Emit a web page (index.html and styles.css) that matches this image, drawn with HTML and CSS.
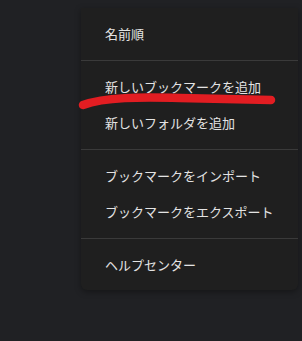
FILE: index.html
```html
<!DOCTYPE html>
<html lang="ja">
<head>
    <meta charset="UTF-8">
    <title>ブックマーク</title>
    <link rel="stylesheet" href="styles.css">
</head>
<body>
    <div class="menu">
        <div class="menu-item">名前順</div>
        <div class="separator"></div>
        <div class="menu-item">新しいブックマークを追加</div>
        <div class="menu-item">新しいフォルダを追加</div>
        <div class="separator"></div>
        <div class="menu-item">ブックマークをインポート</div>
        <div class="menu-item">ブックマークをエクスポート</div>
        <div class="separator"></div>
        <div class="menu-item">ヘルプセンター</div>
    </div>
    <!-- red marker stroke drawn over the menu -->
    <svg class="marker" width="302" height="341" viewBox="0 0 302 341">
        <path d="M83,105 C105,97 140,97 180,98 L271,100" fill="none" stroke="#e21d22" stroke-width="8.5" stroke-linecap="round"/>
    </svg>
</body>
</html>
```

FILE: styles.css
```css
body {
    margin: 0;
    background: #202124;
    font-family: "Noto Sans CJK JP", "Noto Sans", sans-serif;
    height: 341px;
    overflow: hidden;
    position: relative;
}
.menu {
    margin: 8px 0 0 81px;
    width: 217px;
    padding: 8px 0 7px;
    background: #1f1f1f;
    border-radius: 0 0 6px 6px;
    box-shadow: 0 2px 6px rgba(0, 0, 0, 0.35);
}
.menu-item {
    height: 36px;
    line-height: 36px;
    padding-left: 24px;
    font-size: 13px;
    color: #e3e3e3;
}
.separator {
    height: 1px;
    background: #3a3a3a;
    margin: 8px 0;
}
.marker {
    position: absolute;
    left: 0;
    top: 0;
}
```
